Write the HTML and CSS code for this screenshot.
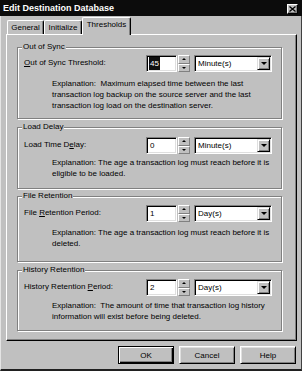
FILE: index.html
```html
<!DOCTYPE html>
<html>
<head>
<meta charset="utf-8">
<link rel="stylesheet" href="styles.css">
</head>
<body>
<div class="dialog">
  <div class="titlebar">
    <span class="title">Edit Destination Database</span>
    <span class="close"><svg width="7" height="6" viewBox="0 0 7 6"><path d="M0.5 0.5 L6.5 5.5 M6.5 0.5 L0.5 5.5" stroke="#000" stroke-width="1.3" fill="none"/></svg></span>
  </div>
  <div class="frame">
    <div class="tabs">
      <div class="tab tab-general">General</div>
      <div class="tab tab-init">Initialize</div>
      <div class="tab tab-thr active">Thresholds</div>
    </div>
    <div class="panel">
      <fieldset class="group g1">
        <legend>Out of Sync</legend>
        <div class="row">
          <span class="lbl"><u>O</u>ut of Sync Threshold:</span>
          <div class="field"><span class="sel">45</span></div>
          <div class="spinbtns"><div class="sb"><i class="up"></i></div><div class="sb"><i class="down"></i></div></div>
          <div class="combo"><span class="cv">Minute(s)</span><span class="dd"><i class="down big"></i></span></div>
        </div>
        <p class="expl">Explanation:&nbsp; Maximum elapsed time between the last<br>transaction log backup on the source server and the last<br>transaction log load on the destination server.</p>
      </fieldset>
      <fieldset class="group g2">
        <legend>Load Delay</legend>
        <div class="row">
          <span class="lbl">Load Time D<u>e</u>lay:</span>
          <div class="field"><span class="val">0</span></div>
          <div class="spinbtns"><div class="sb"><i class="up"></i></div><div class="sb"><i class="down"></i></div></div>
          <div class="combo"><span class="cv">Minute(s)</span><span class="dd"><i class="down big"></i></span></div>
        </div>
        <p class="expl">Explanation: The age a transaction log must reach before it is<br>eligible to be loaded.</p>
      </fieldset>
      <fieldset class="group g3">
        <legend>File Retention</legend>
        <div class="row">
          <span class="lbl">File <u>R</u>etention Period:</span>
          <div class="field"><span class="val">1</span></div>
          <div class="spinbtns"><div class="sb"><i class="up"></i></div><div class="sb"><i class="down"></i></div></div>
          <div class="combo"><span class="cv">Day(s)</span><span class="dd"><i class="down big"></i></span></div>
        </div>
        <p class="expl">Explanation: The age a transaction log must reach before it is<br>deleted.</p>
      </fieldset>
      <fieldset class="group g4">
        <legend>History Retention</legend>
        <div class="row">
          <span class="lbl">History Retention <u>P</u>eriod:</span>
          <div class="field"><span class="val">2</span></div>
          <div class="spinbtns"><div class="sb"><i class="up"></i></div><div class="sb"><i class="down"></i></div></div>
          <div class="combo"><span class="cv">Day(s)</span><span class="dd"><i class="down big"></i></span></div>
        </div>
        <p class="expl">Explanation:&nbsp; The amount of time that transaction log history<br>information will exist before being deleted.</p>
      </fieldset>
    </div>
    <div class="buttons">
      <button class="btn default">OK</button>
      <button class="btn">Cancel</button>
      <button class="btn">Help</button>
    </div>
  </div>
</div>
</body>
</html>
```
FILE: styles.css
```css
* { box-sizing: border-box; }
html, body { margin: 0; padding: 0; }
body {
  background: #c0c0c0;
  font-family: "Liberation Sans", Arial, sans-serif;
  font-size: 8px;
  color: #000;
}
.dialog {
  width: 302px;
  height: 371px;
  display: flex;
  flex-direction: column;
  background: #c0c0c0;
}
.titlebar {
  height: 16px;
  background: #0c0c0c;
  color: #fff;
  display: flex;
  align-items: center;
  justify-content: space-between;
  padding: 0 4px 0 3px;
}
.title {
  font-weight: bold;
  font-size: 9px;
  line-height: 16px;
}
.close {
  width: 11px;
  height: 10px;
  margin-top: 1px;
  background: #c0c0c0;
  border: 1px solid;
  border-color: #fff #000 #000 #fff;
  box-shadow: inset -1px -1px 0 #808080;
  display: flex;
  align-items: center;
  justify-content: center;
}
.close svg { display: block; }
.frame {
  flex: 1;
  display: flex;
  flex-direction: column;
  padding: 1px 4px 0 5px;
  border-left: 1px solid #e4e4e4;
  border-right: 1px solid #404040;
  border-bottom: 2px solid #202020;
}
.tabs {
  height: 17px;
  display: flex;
  align-items: flex-end;
}
.tab {
  height: 14px;
  border-top: 1px solid #fff;
  border-left: 1px solid #fff;
  border-right: 1px solid #000;
  box-shadow: inset -1px 0 0 #808080;
  border-radius: 2px 2px 0 0;
  text-align: center;
  line-height: 13px;
  background: #c0c0c0;
}
.tab-general { width: 37px; margin-left: 1px; }
.tab-init { width: 38px; }
.tab-thr { width: 49px; }
.tab.active {
  height: 18px;
  margin-bottom: -1px;
  position: relative;
  z-index: 1;
  line-height: 14px;
}
.panel {
  height: 307px;
  border-top: 1px solid #fff;
  border-left: 1px solid #fff;
  border-right: 1px solid #000;
  border-bottom: 1px solid #000;
  box-shadow: inset -1px -1px 0 #808080;
  padding: 7px 0 0 10px;
}
.group {
  margin: 0;
  width: 265px;
  min-width: 0;
  border: 1px solid #808080;
  box-shadow: 1px 1px 0 #fff, inset 1px 1px 0 #fff;
  padding: 0 6px;
}
.group legend {
  padding: 0 1px;
  margin-left: -2px;
  line-height: 10px;
  background: #c0c0c0;
}
.row {
  display: flex;
  align-items: flex-start;
  height: 17px;
}
.lbl {
  width: 122px;
  line-height: 10px;
  padding-top: 3px;
  white-space: nowrap;
}
.field {
  width: 31px;
  height: 17px;
  background: #fff;
  border: 1px solid;
  border-color: #808080 #fff #fff #808080;
  box-shadow: inset 1px 1px 0 #000, inset -1px -1px 0 #dfdfdf;
  padding: 1px 0 0 3px;
  line-height: 13px;
}
.sel {
  display: inline-block;
  background: #101010;
  color: #fff;
  padding: 0 1px;
  margin-left: -1px;
  height: 13px;
}
.spinbtns {
  width: 12px;
  height: 17px;
  margin-left: 1px;
  display: flex;
  flex-direction: column;
}
.sb {
  flex: 1;
  background: #c0c0c0;
  border: 1px solid;
  border-color: #fff #808080 #808080 #fff;
  display: flex;
  align-items: center;
  justify-content: center;
}
.up, .down {
  display: block;
  width: 0;
  height: 0;
  border-left: 2px solid transparent;
  border-right: 2px solid transparent;
}
.up { border-bottom: 2px solid #000; }
.down { border-top: 2px solid #000; }
.down.big {
  border-left-width: 3px;
  border-right-width: 3px;
  border-top-width: 3px;
}
.combo {
  width: 78px;
  height: 17px;
  margin-left: 4px;
  background: #fff;
  border: 1px solid;
  border-color: #808080 #fff #fff #808080;
  box-shadow: inset 1px 1px 0 #000, inset -1px -1px 0 #dfdfdf;
  display: flex;
  padding: 1px;
}
.cv {
  flex: 1;
  padding-left: 2px;
  line-height: 13px;
}
.dd {
  width: 13px;
  height: 13px;
  background: #c0c0c0;
  border: 1px solid;
  border-color: #dfdfdf #000 #000 #dfdfdf;
  box-shadow: inset 1px 1px 0 #fff, inset -1px -1px 0 #808080;
  display: flex;
  align-items: center;
  justify-content: center;
}
.expl {
  margin: 0 0 0 28px;
  line-height: 11px;
  white-space: nowrap;
}
.g1 .row { margin-top: 3px; }
.g1 .expl { margin-top: 6px; }
.g1 { padding-bottom: 7px; }
.g2 { margin-top: 3px; padding-bottom: 9px; }
.g2 .row { margin-top: 5px; }
.g2 .expl { margin-top: 3px; }
.g3 { margin-top: 2px; padding-bottom: 12px; }
.g3 .row { margin-top: 4px; }
.g3 .expl { margin-top: 5px; }
.g4 { margin-top: 3px; padding-bottom: 8px; }
.g4 .row { margin-top: 4px; }
.g4 .expl { margin-top: 4px; }
.buttons {
  display: flex;
  justify-content: flex-end;
  gap: 5px;
  margin-top: 5px;
  margin-right: 1px;
}
.btn {
  width: 56px;
  height: 18px;
  padding: 0;
  margin: 0;
  font-family: "Liberation Sans", Arial, sans-serif;
  font-size: 8px;
  color: #000;
  background: #c0c0c0;
  border: 1px solid;
  border-color: #fff #000 #000 #fff;
  box-shadow: inset 1px 1px 0 #dfdfdf, inset -1px -1px 0 #808080;
}
.btn.default {
  border-color: #000;
  box-shadow: inset 1px 1px 0 #fff, inset -1px -1px 0 #000, inset -2px -2px 0 #808080;
}
```
